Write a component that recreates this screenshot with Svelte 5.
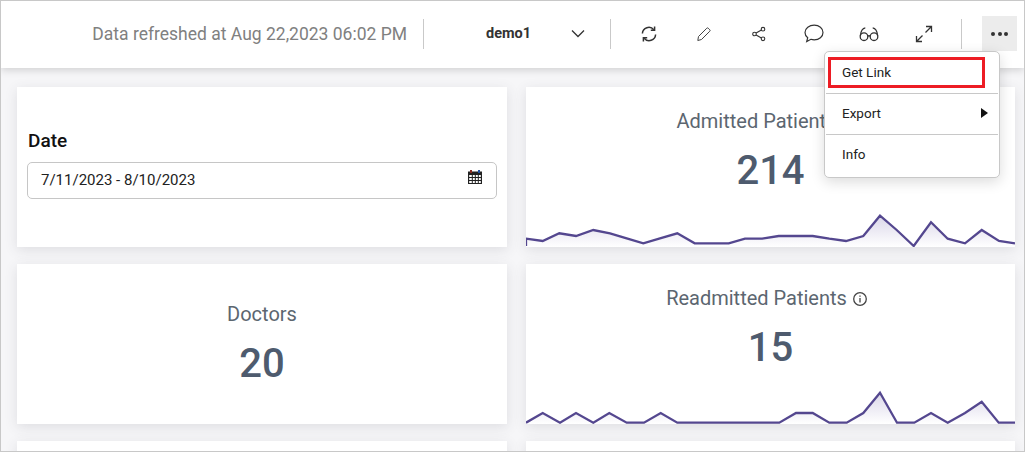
<script>
	const admitted = [
		[18,168],[18,146],[68,153],[118,130],[168,138],[220,120],[270,130],[320,145],[370,160],[420,145],[472,130],
		[524,160],[626,160],[675,146],[726,146],[776,138],[878,138],[928,146],[978,153],[1030,138],[1080,77],
		[1130,120],[1181,168],[1233,97],[1283,146],[1335,160],[1385,120],[1437,153],[1485,160]
	];
	const readmitted = [
		[18,158],[68,129],[120,158],[168,129],[220,158],[268,129],[320,158],[372,158],[422,129],[472,158],
		[778,158],[828,129],[878,129],[928,158],[980,158],[1030,129],[1080,68],[1131,158],[1183,158],[1233,129],
		[1283,158],[1335,129],[1385,95],[1436,158],[1485,158]
	];

	// points were read off 3x crops; bottom is the crop-relative y of the card's lower edge
	const toLine = (pts, bottom) =>
		pts.map(([x, y]) => `${(x / 3 - 6).toFixed(1)},${(50 - (bottom - y) / 3).toFixed(1)}`).join(" ");
	const toArea = (pts, bottom) => `0,50 ${toLine(pts, bottom)} 489,50`;

	const cards = [
		{ title: "Admitted Patients", value: "214", pts: admitted, bottom: 171, kebab: true },
		{ title: "Doctors", value: "20" },
		{ title: "Readmitted Patients", value: "15", pts: readmitted, bottom: 162 }
	];
</script>

<div class="page">
	<header class="topbar">
		<span class="refreshed">Data refreshed at Aug 22,2023 06:02 PM</span>
		<span class="sep"></span>
		<div class="picker">
			<span class="name">demo1</span>
			<svg width="14" height="9" viewBox="0 0 14 9"><path d="M1 1.5l6 6 6-6" fill="none" stroke="#333" stroke-width="1.3" /></svg>
		</div>
		<span class="sep"></span>
		<div class="tools">
			<button aria-label="Refresh">
				<svg width="18" height="18" viewBox="0 0 18 18" fill="none" stroke="#333" stroke-width="1.5">
					<path d="M2.400 8.500A6.400 6.400 0 0 1 13.800 4.800" />
					<path d="M15.600 9.500A6.400 6.400 0 0 1 4.200 13.200" />
					<path d="M14.600 1.500v3.800h-3.800" />
					<path d="M3.400 16.500v-3.800h3.800" />
				</svg>
			</button>
			<button aria-label="Edit">
				<svg width="16" height="16" viewBox="0 0 16 16" fill="none" stroke="#444" stroke-width="1">
					<path d="M2.500 10.500L10.800 2.200a1 1 0 0 1 1.400 0l1.600 1.600a1 1 0 0 1 0 1.400L5.500 13.500l-3.700 1z" />
				</svg>
			</button>
			<button aria-label="Share">
				<svg width="16" height="16" viewBox="0 0 16 16" fill="none" stroke="#333" stroke-width="1.100">
					<circle cx="3.500" cy="8" r="1.800" />
					<circle cx="12" cy="3.200" r="1.800" />
					<circle cx="12" cy="12.800" r="1.800" />
					<path d="M5.100 7.100l5.300-3M5.100 8.900l5.300 3" />
				</svg>
			</button>
			<button aria-label="Comment">
				<svg width="20" height="19" viewBox="0 0 20 19" fill="none" stroke="#333" stroke-width="1.200">
					<path d="M10.200 1.200c4.900 0 8.800 3 8.800 7.300s-3.900 7.300-8.800 7.300c-1.200 0-2.300-.2-3.300-.5L2.700 17.600l1-3.900C2 12.400 1 10.600 1 8.500 1 4.200 5.300 1.200 10.200 1.200z" />
				</svg>
			</button>
			<button aria-label="Preview">
				<svg width="20" height="16" viewBox="0 0 20 16" fill="none" stroke="#333" stroke-width="1.300">
					<circle cx="5" cy="10.700" r="3.800" />
					<circle cx="15" cy="10.700" r="3.800" />
					<path d="M8.700 10.200c.8-.6 1.800-.6 2.600 0" />
					<path d="M1.300 9.800C1.800 5.500 3.300 2.200 6.300 1.800M18.700 9.800C18.200 5.500 16.700 2.200 13.700 1.800" />
				</svg>
			</button>
			<button aria-label="Full screen">
				<svg width="18" height="18" viewBox="0 0 18 18" fill="none" stroke="#333" stroke-width="1.300">
					<path d="M10.500 7.500L16.500 1.500M11 1.500h5.500V7" />
					<path d="M7.500 10.500L1.500 16.500M7 16.500H1.500V11" />
				</svg>
			</button>
		</div>
		<span class="sep last"></span>
		<button class="more" aria-label="More">
			<i></i><i></i><i></i>
		</button>
	</header>

	<main class="grid">
		<section class="card filter">
			<h3>Date</h3>
			<div class="range">
				<span>7/11/2023 - 8/10/2023</span>
				<svg width="16" height="16" viewBox="0 0 16 16">
					<path d="M1 2.500h14V15H1z" fill="#222" />
					<path d="M3 1h2v3H3z" fill="#8a2a20" />
					<path d="M11 1h2v3h-2z" fill="#1f4fa0" />
					<path d="M2.200 6h2.600v2H2.200zM5.800 6h2v2h-2zM8.800 6h2v2h-2zM11.800 6h2v2h-2zM2.200 9h2.600v2H2.200zM5.800 9h2v2h-2zM8.800 9h2v2h-2zM11.800 9h2v2h-2zM2.200 12h2.600v2H2.200zM5.800 12h2v2h-2zM8.800 12h2v2h-2zM11.800 12h2v2h-2z" fill="#fff" />
				</svg>
			</div>
		</section>

		{#each cards as card}
			<section class="card metric" class:plain={!card.pts}>
				{#if card.kebab}
					<span class="kebab"></span>
				{/if}
				<div class="title">
					{card.title}
					{#if card.pts}
						<svg class="info" width="14" height="14" viewBox="0 0 14 14" fill="none" stroke="#444" stroke-width="1.300">
							<circle cx="7" cy="7" r="6.300" />
							<path d="M7 6v4.400M7 3.400v1.400" />
						</svg>
					{/if}
				</div>
				<div class="value">{card.value}</div>
				{#if card.pts}
					<svg class="spark" width="489" height="50" viewBox="0 0 489 50">
						<defs>
							<linearGradient id="fade" x1="0" y1="0" x2="0" y2="1">
								<stop offset="0" stop-color="#5a4a9c" stop-opacity="0.22" />
								<stop offset="1" stop-color="#5a4a9c" stop-opacity="0" />
							</linearGradient>
						</defs>
						<polygon points={toArea(card.pts, card.bottom)} fill="url(#fade)" />
						<polyline points={toLine(card.pts, card.bottom)} fill="none" stroke="#54478f" stroke-width="2.300" />
					</svg>
				{/if}
			</section>
		{/each}

		<section class="card"></section>
		<section class="card"></section>
	</main>

	<div class="menu">
		<div class="item active">Get Link</div>
		<hr />
		<div class="item">Export <span class="arrow"></span></div>
		<hr />
		<div class="item">Info</div>
	</div>
</div>

<style>
	:global(body) {
		margin: 0;
	}

	.page {
		position: relative;
		box-sizing: border-box;
		width: 1025px;
		height: 452px;
		overflow: hidden;
		border: 1px solid #c8c8c8;
		background: #f6f6f8;
		font-family: Roboto, "Liberation Sans", sans-serif;
	}

	.topbar {
		position: relative;
		z-index: 1;
		display: flex;
		align-items: center;
		justify-content: flex-end;
		box-sizing: border-box;
		height: 67px;
		padding: 0 7px 2px 0;
		background: #fff;
		box-shadow: 0 2px 8px rgba(0, 0, 0, 0.16);
	}

	.refreshed {
		font-size: 17.5px;
		color: #808080;
		margin-right: 16px;
	}

	.sep {
		width: 1px;
		height: 30px;
		background: #c9c9c9;
	}

	.sep.last {
		margin-left: 10px;
		margin-right: 20px;
	}

	.picker {
		display: flex;
		align-items: center;
		justify-content: space-between;
		box-sizing: border-box;
		width: 186px;
		padding: 0 25px 0 62px;
	}

	.name {
		font-size: 14.5px;
		font-weight: 700;
		color: #333;
	}

	.tools {
		display: flex;
		margin-left: 10px;
	}

	.tools button {
		display: flex;
		align-items: center;
		justify-content: center;
		width: 55px;
		height: 35px;
		padding: 0;
		border: none;
		background: none;
	}

	.more {
		display: flex;
		align-items: center;
		justify-content: center;
		gap: 2.500px;
		width: 35px;
		height: 35px;
		padding: 0;
		border: none;
		background: #ececec;
	}

	.more i {
		width: 4px;
		height: 4px;
		border-radius: 50%;
		background: #333;
	}

	.grid {
		display: grid;
		grid-template-columns: 490px 489px;
		grid-auto-rows: 160px;
		gap: 17px 19px;
		padding: 19px 0 0 16px;
	}

	.card {
		background: #fff;
		box-shadow: 0 3px 12px rgba(60, 60, 80, 0.13);
	}

	.filter {
		display: flex;
		flex-direction: column;
		padding: 43px 10px 0 10px;
	}

	.filter h3 {
		margin: 0 0 10px 1px;
		font-size: 19px;
		font-weight: 500;
		line-height: 22px;
		color: #111;
	}

	.range {
		display: flex;
		align-items: center;
		justify-content: space-between;
		height: 35px;
		padding: 0 12px 0 13px;
		border: 1px solid #c6c6c6;
		border-radius: 5px;
		font-size: 15px;
		color: #222;
	}

	.range span {
		margin-bottom: 1px;
	}

	.range svg {
		margin-top: -8px;
		margin-right: 1px;
	}

	.metric {
		position: relative;
		display: flex;
		flex-direction: column;
		align-items: center;
		padding-top: 23px;
		color: #5c6670;
	}

	.metric.plain {
		padding-top: 39px;
	}

	.kebab {
		position: absolute;
		top: 13px;
		right: 15px;
		width: 2px;
		height: 3px;
		background: #555;
	}

	.title {
		display: flex;
		align-items: center;
		gap: 6px;
		font-size: 20px;
		line-height: 23px;
	}

	.info {
		margin-right: 8px;
	}

	.value {
		margin-top: 14px;
		font-size: 40px;
		font-weight: 500;
		line-height: 47px;
		color: #4e5b6e;
	}

	.spark {
		display: block;
		flex-shrink: 0;
		margin-top: auto;
	}

	.menu {
		position: absolute;
		z-index: 2;
		top: 50px;
		left: 823px;
		box-sizing: border-box;
		width: 176px;
		height: 127px;
		padding: 5px 1px 0;
		background: #fff;
		border: 1px solid #c8c8c8;
		border-radius: 5px;
		box-shadow: 0 4px 14px rgba(0, 0, 0, 0.14);
		font-size: 13.5px;
		color: #222;
	}

	.menu hr {
		margin: 5px 0;
		border: none;
		border-top: 1px solid #c8c8c8;
	}

	.item {
		display: flex;
		align-items: center;
		justify-content: space-between;
		box-sizing: border-box;
		height: 30px;
		padding: 0 10px 2px 16px;
	}

	.item.active {
		width: 157px;
		height: 31px;
		margin-left: 2px;
		padding-left: 11px;
		border: 3px solid #ed1c24;
	}

	.arrow {
		width: 0;
		height: 0;
		border-left: 7px solid #111;
		border-top: 5px solid transparent;
		border-bottom: 5px solid transparent;
	}
</style>
